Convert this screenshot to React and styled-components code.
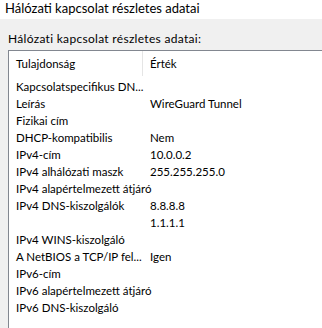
import React from 'react';
import styled, { createGlobalStyle } from 'styled-components';

const GlobalStyle = createGlobalStyle`
  html, body {
    margin: 0;
    padding: 0;
    background: #f0f0f0;
    overflow: hidden;
  }
  body {
    font-family: "Segoe UI", Lato, "Liberation Sans", Arial, sans-serif;
    color: #000;
  }
`;

const Window = styled.div`
  width: 322px;
  height: 328px;
  display: flex;
  flex-direction: column;
  overflow: hidden;
`;

const TitleBar = styled.div`
  height: 19px;
  background: #fff;
  padding-left: 5px;
  font-size: 13px;
  line-height: 17px;
  white-space: nowrap;
`;

const Body = styled.div`
  flex: 1;
  padding: 12px 0 0 8px;
  display: flex;
  flex-direction: column;
`;

const Label = styled.div`
  font-size: 12px;
  letter-spacing: 0.3px;
  line-height: 16px;
  height: 19px;
  white-space: nowrap;
`;

const ListBox = styled.div`
  flex: 1;
  width: 340px;
  background: #fff;
  border: 1px solid #828790;
  border-right: none;
  border-bottom: none;
`;

const HeaderRow = styled.div`
  display: grid;
  grid-template-columns: 134px 1fr;
  height: 25px;
  font-size: 11.5px;
  margin-bottom: 2px;
`;

const HeaderCell = styled.div`
  padding-left: 7px;
  display: flex;
  align-items: center;
  border-right: ${p => (p.divider ? '1px solid #e5e5e5' : 'none')};
`;

const Row = styled.div`
  display: grid;
  grid-template-columns: 134px 1fr;
  height: 17px;
  font-size: 11.5px;
  line-height: 17px;
  white-space: nowrap;
`;

const Cell = styled.div`
  padding-left: 7px;
`;

const rows = [
  ['Kapcsolatspecifikus DN...', ''],
  ['Leírás', 'WireGuard Tunnel'],
  ['Fizikai cím', ''],
  ['DHCP-kompatibilis', 'Nem'],
  ['IPv4-cím', '10.0.0.2'],
  ['IPv4 alhálózati maszk', '255.255.255.0'],
  ['IPv4 alapértelmezett átjáró', ''],
  ['IPv4 DNS-kiszolgálók', '8.8.8.8'],
  ['', '1.1.1.1'],
  ['IPv4 WINS-kiszolgáló', ''],
  ['A NetBIOS a TCP/IP fel...', 'Igen'],
  ['IPv6-cím', ''],
  ['IPv6 alapértelmezett átjáró', ''],
  ['IPv6 DNS-kiszolgáló', ''],
];

export default function App() {
  return (
    <Window>
      <GlobalStyle />
      <TitleBar>Hálózati kapcsolat részletes adatai</TitleBar>
      <Body>
        <Label>Hálózati kapcsolat részletes adatai:</Label>
        <ListBox>
          <HeaderRow>
            <HeaderCell divider>Tulajdonság</HeaderCell>
            <HeaderCell>Érték</HeaderCell>
          </HeaderRow>
          {rows.map(([prop, value], i) => (
            <Row key={i}>
              <Cell>{prop}</Cell>
              <Cell>{value}</Cell>
            </Row>
          ))}
        </ListBox>
      </Body>
    </Window>
  );
}
